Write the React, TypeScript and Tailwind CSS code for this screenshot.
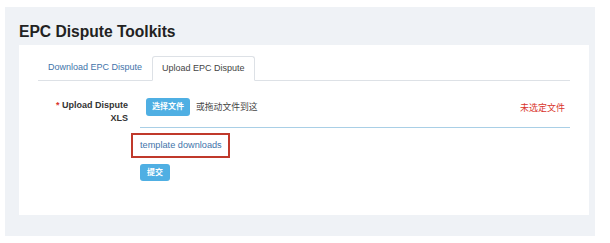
export default function App() {
  return (
    <div className="h-[243px] w-[610px] bg-white pl-[5px] pt-[7px] font-['Liberation_Sans',Arial,'Noto_Sans_CJK_SC',sans-serif]">
      <div className="flex h-[229px] w-[590px] flex-col bg-[#eff2f6] pl-[14px]">
        <h1 className="mt-[12px] h-[26px] text-[15.6px] font-bold leading-[26px] text-[#222]">EPC Dispute Toolkits</h1>
        <div className="h-[170px] w-[570px] bg-white px-[19px] pt-[11px]">
          {/* tabs */}
          <div className="flex h-[25px] border-b border-[#dde1e6]">
            <div className="flex h-[24px] items-center px-[10px] text-[9px] text-[#3f74aa]">Download EPC Dispute</div>
            <div className="-mb-px flex h-[25px] items-center rounded-t-[3px] border border-[#dde1e6] border-b-white bg-white px-[9px] text-[9px] text-[#444]">
              Upload EPC Dispute
            </div>
          </div>

          {/* upload row */}
          <div className="mt-[15px] flex">
            <div className="mt-[3px] w-[90px] text-right text-[9px] font-bold leading-[13px] text-[#333]">
              <span className="text-[#d9342b]">* </span>Upload Dispute
              <br />
              XLS
            </div>
            <div className="ml-[12px] flex-1">
              <div className="flex h-[32px] items-start border-b border-[#a9cfe6] pl-[6px] pr-[5px]">
                <div className="mt-[2px] flex h-[18px] items-center rounded-[3px] bg-[#4fafe3] px-[6px] text-[8px] font-bold text-white">
                  选择文件
                </div>
                <span className="ml-[6px] mt-[2px] text-[8.8px] leading-[18px] text-[#444]">或拖动文件到这</span>
                <span className="ml-auto mt-[3px] text-[9px] leading-[18px] text-[#d9342b]">未选定文件</span>
              </div>
              <div className="-ml-[9px] mt-[5px] flex h-[25px] w-[99px] items-center whitespace-nowrap border-2 border-[#c0392b] pl-[7px] text-[9.2px] text-[#3f74aa]">
                template downloads
              </div>
              <div className="mt-[6px] flex h-[17px] w-[30px] items-center justify-center rounded-[3px] bg-[#4fafe3] text-[8px] font-bold text-white">
                提交
              </div>
            </div>
          </div>
        </div>
      </div>
    </div>
  )
}
